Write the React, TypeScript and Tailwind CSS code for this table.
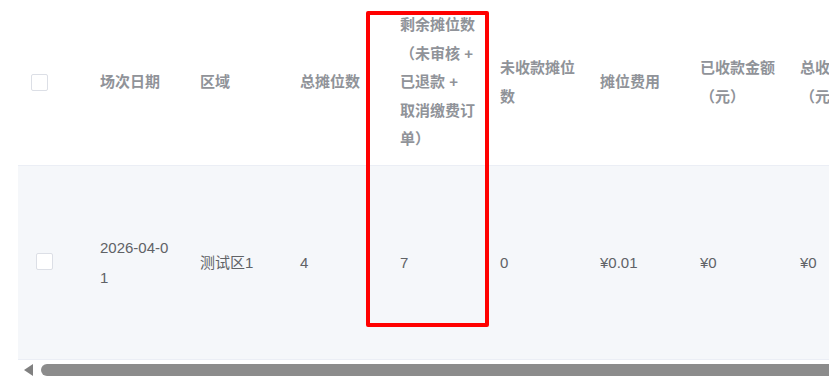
import React from "react";

type Col = { title: string; value: string };

const columns: Col[] = [
  { title: "场次日期", value: "2026-04-01" },
  { title: "区域", value: "测试区1" },
  { title: "总摊位数", value: "4" },
  { title: "剩余摊位数（未审核 + 已退款 + 取消缴费订单）", value: "7" },
  { title: "未收款摊位数", value: "0" },
  { title: "摊位费用", value: "¥0.01" },
  { title: "已收款金额（元）", value: "¥0" },
  { title: "总收款金额（元）", value: "¥0" },
];

function Checkbox() {
  return (
    <span className="block w-[17px] h-[17px] rounded-[2px] border border-[#dcdfe6] bg-white" />
  );
}

export default function App() {
  return (
    <div
      className="relative w-[829px] h-[377px] overflow-hidden bg-white"
      style={{ fontFamily: '"Liberation Sans", "Noto Sans CJK SC", sans-serif' }}
    >
      <div className="ml-[18px] w-[870px]">
        {/* header */}
        <div className="flex h-[166px] border-b border-[#ebeef5] bg-white">
          <div className="w-[70px] shrink-0 flex items-center pl-[13px]">
            <Checkbox />
          </div>
          {columns.map((c) => (
            <div
              key={c.title}
              className="w-[100px] shrink-0 flex items-center px-[12px]"
            >
              <div className="w-[76px] text-[15px] leading-[28.4px] font-bold text-[#909399] break-all">
                {c.title}
              </div>
            </div>
          ))}
        </div>

        {/* data row */}
        <div className="flex h-[194px] border-b border-[#ebeef5] bg-[#f5f7fa]">
          <div className="w-[70px] shrink-0 flex items-center pl-[18px] pb-[3px]">
            <Checkbox />
          </div>
          {columns.map((c) => (
            <div
              key={c.title}
              className="w-[100px] shrink-0 flex items-center px-[12px]"
            >
              <div className="w-[76px] text-[15px] leading-[30px] text-[#606266] break-all">
                {c.value}
              </div>
            </div>
          ))}
        </div>

        {/* horizontal scrollbar */}
        <div className="flex items-center h-[17px] bg-white pt-[2px]">
          <svg width="10" height="12" viewBox="0 0 10 12" className="ml-[6px] shrink-0">
            <path d="M9 0 L9 12 L0 6 Z" fill="#808080" />
          </svg>
          <div className="ml-[7px] h-[12px] flex-1 rounded-l-[6px] bg-[#8c8c8c]" />
        </div>
      </div>

      {/* highlight frame */}
      <div className="absolute left-[366px] top-[11px] w-[123px] h-[316px] border-4 border-[#ff0000] rounded-[2px] pointer-events-none" />
    </div>
  );
}
